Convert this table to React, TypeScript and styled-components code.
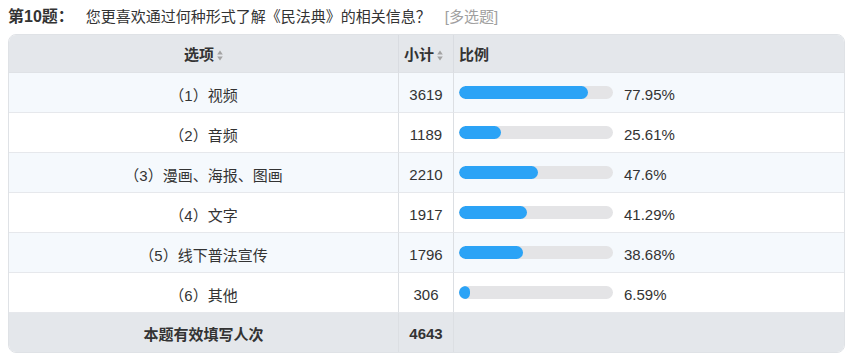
import React from "react";
import styled, { createGlobalStyle } from "styled-components";

const Global = createGlobalStyle`
  html, body { margin: 0; padding: 0; background: #fff; }
  body { font-family: "Liberation Sans", "Noto Sans CJK SC", sans-serif; color: #333; }
`;

const Page = styled.div`
  padding: 0 9px 0 8px;
`;

const Title = styled.div`
  display: flex;
  align-items: center;
  height: 30px;
  margin-bottom: 4px;
  font-size: 15px;
  color: #333;
  white-space: nowrap;
`;

const QNo = styled.span`
  font-weight: bold;
  font-size: 16px;
  margin-right: 12px;
`;

const QType = styled.span`
  color: #a0a0a0;
  margin-left: 14px;
`;

const Table = styled.table`
  width: 100%;
  border-collapse: separate;
  border-spacing: 0;
  border: 1px solid #dfe2e6;
  border-radius: 8px;
  overflow: hidden;
  font-size: 15px;
  table-layout: fixed;
`;

const Row = styled.tr<{ $bg: string }>`
  background: ${(p) => p.$bg};
`;

const Th = styled.th<{ $align?: string }>`
  height: 37px;
  padding: 0 5px;
  font-weight: bold;
  font-size: 15px;
  color: #333;
  text-align: ${(p) => p.$align || "center"};
  border-left: 1px solid #d9dce1;
  border-bottom: 1px solid #dfe2e6;
  &:first-child { border-left: none; }
`;

const Td = styled.td<{ $align?: string; $bold?: boolean }>`
  height: 36px;
  padding: 3px 5px 0;
  color: #333;
  font-weight: ${(p) => (p.$bold ? "bold" : "normal")};
  text-align: ${(p) => p.$align || "center"};
  border-left: 1px solid #dcdfe3;
  border-bottom: 1px solid #e6e8ec;
  &:first-child { border-left: none; }
  tr:last-child > & { border-bottom: none; padding-top: 1px; height: 38px; }
`;

const SortIcon = styled.svg`
  display: inline-block;
  vertical-align: middle;
  margin-left: 3px;
  margin-top: -2px;
`;

const BarCell = styled.div`
  display: flex;
  align-items: center;
`;

const Track = styled.div`
  width: 154px;
  height: 13px;
  border-radius: 7px;
  background: #e4e4e6;
  overflow: hidden;
  margin-right: 11px;
  margin-top: -3px;
`;

const Fill = styled.div`
  height: 100%;
  border-radius: 7px;
  background: #2ba3f6;
`;

const Pct = styled.span`
  font-size: 15px;
  color: #333;
`;

const Sort = () => (
  <SortIcon width="6" height="11" viewBox="0 0 6 11">
    <path d="M3 0.5 L5.8 4.5 L0.2 4.5 Z" fill="#a3a3a3" />
    <path d="M3 10.5 L5.8 6.5 L0.2 6.5 Z" fill="#a3a3a3" />
  </SortIcon>
);

const rows = [
  { label: "（1）视频", n: 3619, pct: 77.95, text: "77.95%" },
  { label: "（2）音频", n: 1189, pct: 25.61, text: "25.61%" },
  { label: "（3）漫画、海报、图画", n: 2210, pct: 47.6, text: "47.6%" },
  { label: "（4）文字", n: 1917, pct: 41.29, text: "41.29%" },
  { label: "（5）线下普法宣传", n: 1796, pct: 38.68, text: "38.68%" },
  { label: "（6）其他", n: 306, pct: 6.59, text: "6.59%" },
];

export default function App() {
  return (
    <Page>
      <Global />
      <Title>
        <QNo>第10题：</QNo>
        <span>您更喜欢通过何种形式了解《民法典》的相关信息？</span>
        <QType>[多选题]</QType>
      </Title>
      <Table>
        <colgroup>
          <col style={{ width: 389 }} />
          <col style={{ width: 55 }} />
          <col />
        </colgroup>
        <thead>
          <Row $bg="#e4e7eb">
            <Th>
              选项
              <Sort />
            </Th>
            <Th $align="left">
              小计
              <Sort />
            </Th>
            <Th $align="left">比例</Th>
          </Row>
        </thead>
        <tbody>
          {rows.map((r, i) => (
            <Row key={r.label} $bg={i % 2 === 0 ? "#f5f9fd" : "#ffffff"}>
              <Td>{r.label}</Td>
              <Td>{r.n}</Td>
              <Td $align="left">
                <BarCell>
                  <Track>
                    <Fill style={{ width: `${(r.pct * 1.654).toFixed(1)}px` }} />
                  </Track>
                  <Pct>{r.text}</Pct>
                </BarCell>
              </Td>
            </Row>
          ))}
          <Row $bg="#e4e7eb">
            <Td $bold>本题有效填写人次</Td>
            <Td $bold>4643</Td>
            <Td />
          </Row>
        </tbody>
      </Table>
    </Page>
  );
}
